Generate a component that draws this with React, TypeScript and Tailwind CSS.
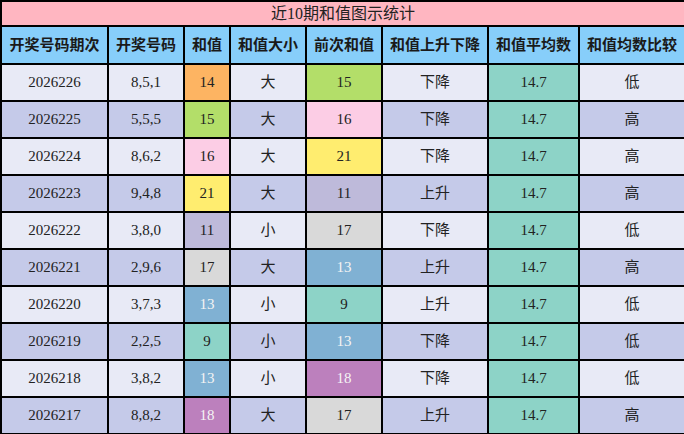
import React from 'react';

const font = { fontFamily: '"Liberation Serif", "Noto Sans CJK SC", serif' };

const SET3: Record<number, string> = {
  9: 'bg-[#8dd3c7]',
  11: 'bg-[#bebada]',
  13: 'bg-[#80b1d3] text-[#f4f4f4]',
  14: 'bg-[#fdb462]',
  15: 'bg-[#b3de69]',
  16: 'bg-[#fccde5]',
  17: 'bg-[#d9d9d9]',
  18: 'bg-[#bc80bd] text-[#f4f4f4]',
  21: 'bg-[#ffed6f]',
};

const rows = [
  { issue: '2026226', nums: '8,5,1', sum: 14, size: '大', prev: 15, trend: '下降', cmp: '低' },
  { issue: '2026225', nums: '5,5,5', sum: 15, size: '大', prev: 16, trend: '下降', cmp: '高' },
  { issue: '2026224', nums: '8,6,2', sum: 16, size: '大', prev: 21, trend: '下降', cmp: '高' },
  { issue: '2026223', nums: '9,4,8', sum: 21, size: '大', prev: 11, trend: '上升', cmp: '高' },
  { issue: '2026222', nums: '3,8,0', sum: 11, size: '小', prev: 17, trend: '下降', cmp: '低' },
  { issue: '2026221', nums: '2,9,6', sum: 17, size: '大', prev: 13, trend: '上升', cmp: '高' },
  { issue: '2026220', nums: '3,7,3', sum: 13, size: '小', prev: 9, trend: '上升', cmp: '低' },
  { issue: '2026219', nums: '2,2,5', sum: 9, size: '小', prev: 13, trend: '下降', cmp: '低' },
  { issue: '2026218', nums: '3,8,2', sum: 13, size: '小', prev: 18, trend: '下降', cmp: '低' },
  { issue: '2026217', nums: '8,8,2', sum: 18, size: '大', prev: 17, trend: '上升', cmp: '高' },
];

const headers = ['开奖号码期次', '开奖号码', '和值', '和值大小', '前次和值', '和值上升下降', '和值平均数', '和值均数比较'];
const widths = ['w-[107px]', 'w-[76px]', 'w-[46px]', 'w-[76px]', 'w-[76px]', 'w-[106px]', 'w-[91px]', 'w-[106px]'];

export default function App() {
  return (
    <div className="w-[684px] h-[434px] bg-white overflow-hidden" style={font}>
      <table className="w-[684px] table-fixed border-collapse border-2 border-black text-[15px] text-[#222]">
        <colgroup>
          {widths.map((w, i) => (
            <col key={i} className={w} />
          ))}
        </colgroup>
        <thead>
          <tr className="h-[25px]">
            <th colSpan={8} className="border-2 border-black bg-[#ffb6c1] text-[16px] font-normal leading-none">
              近10期和值图示统计
            </th>
          </tr>
          <tr className="h-[38px] bg-[#87cefa]">
            {headers.map((h) => (
              <th key={h} className="border-2 border-black font-bold text-[15px] text-[#1a1a1a] whitespace-nowrap">
                {h}
              </th>
            ))}
          </tr>
        </thead>
        <tbody>
          {rows.map((r, i) => {
            const bg = i % 2 === 0 ? 'bg-[#e8eaf6]' : 'bg-[#c5cae9]';
            return (
              <tr key={r.issue} className={`h-[37px] ${bg} text-center`}>
                <td className="border-2 border-black">{r.issue}</td>
                <td className="border-2 border-black">{r.nums}</td>
                <td className={`border-2 border-black ${SET3[r.sum]}`}>{r.sum}</td>
                <td className="border-2 border-black">{r.size}</td>
                <td className={`border-2 border-black ${SET3[r.prev]}`}>{r.prev}</td>
                <td className="border-2 border-black">{r.trend}</td>
                <td className="border-2 border-black bg-[#8dd3c7]">14.7</td>
                <td className="border-2 border-black">{r.cmp}</td>
              </tr>
            );
          })}
        </tbody>
      </table>
    </div>
  );
}
